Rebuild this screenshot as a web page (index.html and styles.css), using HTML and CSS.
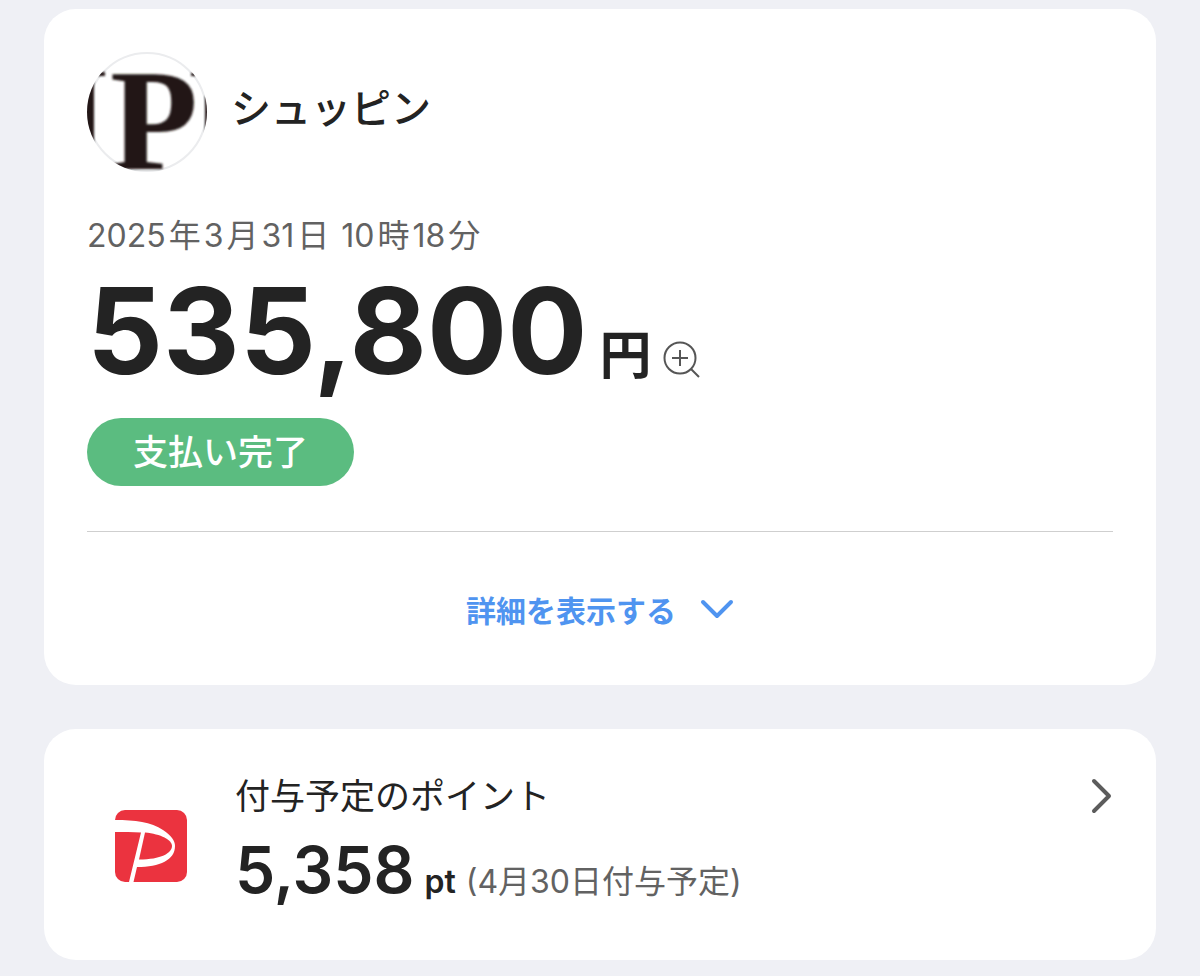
FILE: index.html
```html
<!DOCTYPE html>
<html lang="ja">
<head>
  <meta charset="UTF-8" />
  <meta name="viewport" content="width=device-width, initial-scale=1" />
  <title>支払い完了</title>
  <link rel="stylesheet" href="styles.css">
</head>
<body>

  <main class="container">
    <!-- 支払い内容 -->
    <section class="card payment">
      <header class="shop">
        <svg class="shop-logo" viewBox="0 0 120 120" aria-hidden="true">
          <defs>
            <clipPath id="logoClip"><circle cx="60" cy="60" r="60" /></clipPath>
            <filter id="soft"><feGaussianBlur stdDeviation="1" /></filter>
          </defs>
          <circle cx="60" cy="60" r="59" fill="#fff" stroke="#ebecee" stroke-width="2" />
          <g clip-path="url(#logoClip)">
            <g filter="url(#soft)" fill="#231815">
              <rect x="-4" y="20" width="11" height="84" />
              <rect x="-4" y="20" width="22" height="4" />
              <rect x="104" y="21" width="5" height="3" />
              <rect x="118" y="44" width="6" height="38" />
              <text class="logo-letter" x="23" y="117">P</text>
            </g>
          </g>
        </svg>
        <h1 class="shop-name">シュッピン</h1>
      </header>

      <p class="date">2025<span>年</span>3<span>月</span>31<span>日</span> 10<span>時</span>18<span>分</span></p>

      <div class="amount">
        <span class="amount-value">535,800</span>
        <span class="amount-unit">円</span>
        <button class="zoom" type="button" aria-label="金額を拡大">
          <svg viewBox="0 0 38 38" width="38" height="38">
            <circle cx="17" cy="17" r="15.500" />
            <path d="M17 9v16M9 17h16M28 28l8 8" />
          </svg>
        </button>
      </div>

      <span class="badge">支払い完了</span>

      <button class="details" type="button">
        詳細を表示する
        <svg viewBox="0 0 34 20" width="34" height="20">
          <path d="M3 3l14 14L31 3" />
        </svg>
      </button>
    </section>

    <!-- ポイント -->
    <a class="card points" href="#">
      <svg class="points-logo" viewBox="0 0 72 72" aria-hidden="true">
        <rect width="72" height="72" rx="10" fill="#eb333f" />
        <path fill="#fff" d="M0 10C20 10 36 12 48 20C56 25 60 31 60 36C60 50 45 57 22 57L18.500 72H14L26 22.500C18 22 8 22 0 22Z" />
        <path fill="#eb333f" d="M30 22.500C46 24 57 30 57 36C57 43 46 49.500 24 49.500Z" />
      </svg>
      <div class="points-body">
        <h2 class="points-title">付与予定のポイント</h2>
        <p class="points-value">
          <strong>5,358</strong>
          <b>pt</b>
          <span>(4月30日付与予定)</span>
        </p>
      </div>
      <svg class="arrow" viewBox="0 0 22 36" width="22" height="36">
        <path d="M3 3l15 15L3 33" />
      </svg>
    </a>
  </main>

</body>
</html>
```

FILE: styles.css
```css
* {
  box-sizing: border-box;
}

body {
  background-color: #eff0f5;
  color: #232323;
  font-family: Inter, 'Noto Sans CJK JP', sans-serif;
  margin: 0;
}

h1, h2, p {
  margin: 0;
}

svg {
  display: block;
  flex: none;
}

button {
  background: none;
  border: none;
  padding: 0;
  font-family: inherit;
  cursor: pointer;
}

.container {
  display: flex;
  flex-direction: column;
  gap: 44px;
  padding: 9px 44px 16px;
}

.card {
  background-color: #fff;
  border-radius: 32px;
  padding: 43px;
}

.payment {
  padding-bottom: 0;
}

.shop {
  display: flex;
  align-items: center;
  gap: 24px;
}

.shop-logo {
  width: 120px;
  height: 120px;
}

.logo-letter {
  font-family: 'Liberation Serif', serif;
  font-size: 144px;
  font-weight: bold;
}

.shop-name {
  padding-bottom: 6px;
  font-size: 40px;
  line-height: 48px;
  font-weight: 500;
}

.date {
  margin-top: 44px;
  color: #626262;
  font-size: 32px;
  line-height: 40px;
}

.date span {
  margin: 0 3px;
}

.amount {
  display: flex;
  align-items: baseline;
  height: 120px;
  margin: 15px 0 27px;
}

.amount-value {
  font-size: 119px;
  font-weight: 700;
  line-height: 120px;
}

.amount-unit {
  margin-left: 12px;
  font-size: 52px;
  font-weight: 700;
  line-height: 60px;
}

.zoom {
  align-self: flex-end;
  margin: 0 0 12px 11px;
}

.zoom svg {
  fill: none;
  stroke: #565656;
  stroke-width: 2;
}

.badge {
  display: block;
  width: fit-content;
  background-color: #5bbc80;
  border-radius: 34px;
  color: #fff;
  font-size: 35px;
  font-weight: 500;
  line-height: 68px;
  padding: 0 46px;
}

.details {
  display: flex;
  align-items: center;
  justify-content: center;
  gap: 24px;
  width: 100%;
  height: 154px;
  margin-top: 45px;
  border-top: 1px solid #cfcfcf;
  color: #4f94f0;
  font-size: 30px;
  font-weight: 700;
}

.details svg {
  fill: none;
  stroke: #4f94f0;
  stroke-width: 4;
  stroke-linecap: round;
  stroke-linejoin: round;
}

.points {
  display: flex;
  align-items: flex-start;
  color: inherit;
  text-decoration: none;
  padding-bottom: 46px;
}

.points-logo {
  width: 72px;
  height: 72px;
  margin: 38px 48px 0 28px;
}

.points-body {
  flex: 1;
}

.points-title {
  font-size: 35px;
  font-weight: 400;
  line-height: 48px;
}

.points-value {
  display: flex;
  align-items: baseline;
  gap: 10px;
  margin-top: 18px;
  line-height: 64px;
}

.points-value strong {
  font-size: 64px;
  font-weight: 600;
}

.points-value b {
  font-size: 32px;
  font-weight: 600;
}

.points-value span {
  color: #626262;
  font-size: 32px;
}

.arrow {
  margin-top: 6px;
  fill: none;
  stroke: #5c5c5c;
  stroke-width: 4;
  stroke-linecap: round;
  stroke-linejoin: round;
}
```
